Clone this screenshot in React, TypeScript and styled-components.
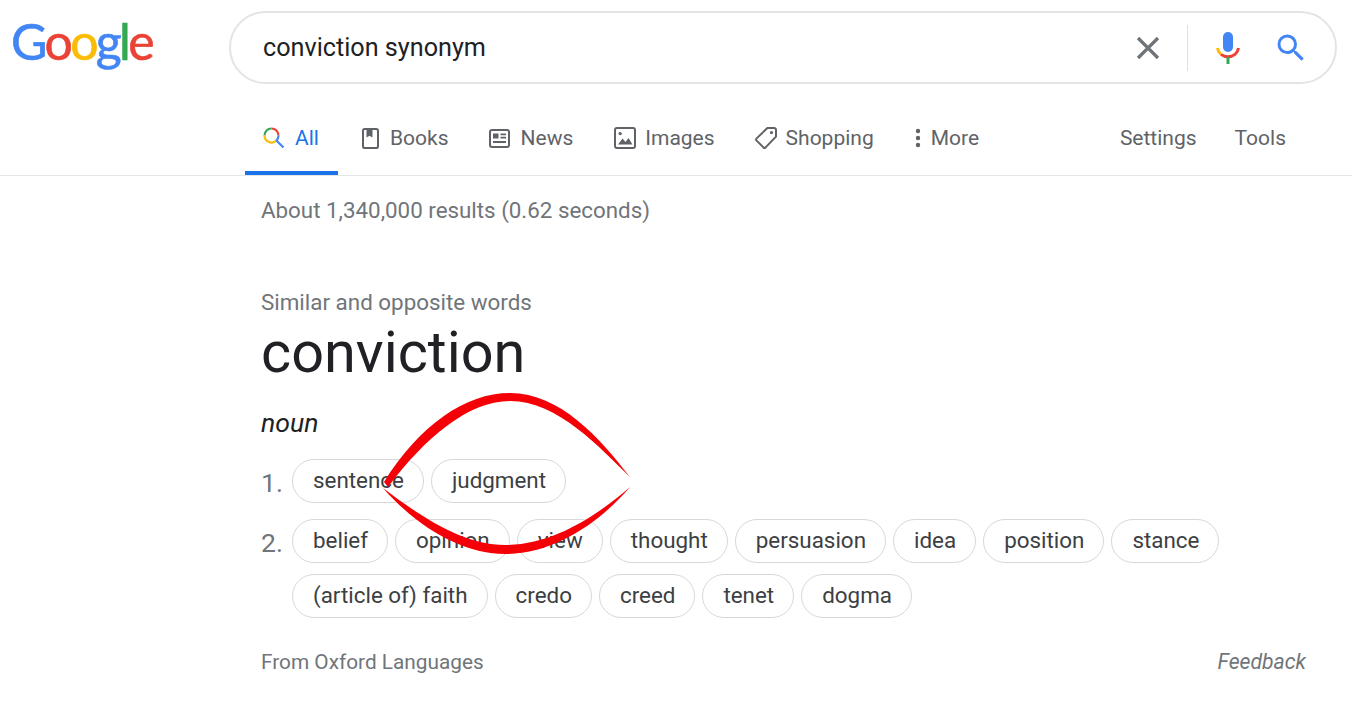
import React from "react";
import styled, { createGlobalStyle } from "styled-components";

const GlobalStyle = createGlobalStyle`
  html, body {
    margin: 0;
    background: #fff;
    font-family: Roboto, "Liberation Sans", sans-serif;
  }
`;

const Page = styled.div`
  position: relative;
  width: 1352px;
  height: 702px;
  overflow: hidden;
`;

const Header = styled.header`
  display: flex;
  align-items: center;
  height: 73px;
  padding: 11px 15px 0 12px;
`;

const Logo = styled.div`
  width: 218px;
  margin: -14px 0 0 -1px;
  font-family: Lato, sans-serif;
  font-size: 50px;
  line-height: 70px;
  letter-spacing: -2.7px;
  -webkit-text-stroke: 0.6px currentColor;
`;

const LogoLetter = styled.span<{ $color: string }>`
  color: ${(p) => p.$color};
`;

const SearchBox = styled.div`
  flex: 1;
  height: 73px;
  display: flex;
  align-items: center;
  padding: 0 26.5px 0 32px;
  border: 2px solid #e3e4e8;
  border-radius: 37px;
  box-sizing: border-box;
`;

const Query = styled.div`
  flex: 1;
  margin-top: -1px;
  font-size: 25.2px;
  color: #202124;
`;

const BoxDivider = styled.span`
  width: 1px;
  height: 46px;
  margin: 0 28px 0 21px;
  background: #dfe1e5;
`;

const MicWrap = styled.span`
  display: flex;
  margin-right: 33px;
`;

const Tabs = styled.nav`
  display: flex;
  height: 92px;
  padding: 0 66px 0 245px;
  border-bottom: 1px solid #e4e5e7;
  box-sizing: border-box;
`;

const Tab = styled.div<{ $gap?: number }>`
  display: flex;
  align-items: center;
  gap: ${(p) => p.$gap ?? 10}px;
  height: 91px;
  padding: 17px 0 0;
  box-sizing: border-box;
  font-size: 21px;
  color: #5f6368;
`;

const ActiveTab = styled(Tab)`
  width: 93px;
  margin-right: 24px;
  padding: 21px 0 0 17px;
  border-bottom: 4px solid #1a73e8;
  color: #1a73e8;
`;

const PlainTab = styled(Tab)<{ $after: number }>`
  margin-right: ${(p) => p.$after}px;
`;

const RightTabs = styled.div`
  display: flex;
  gap: 38px;
  margin-left: auto;
`;

const Stats = styled.div`
  padding: 22px 0 0 261px;
  font-size: 22.35px;
  line-height: 25px;
  color: #70757a;
`;

const Panel = styled.section`
  padding: 67px 46px 0 261px;
`;

const Eyebrow = styled.div`
  font-size: 22.4px;
  line-height: 25px;
  color: #70757a;
`;

const Word = styled.h1`
  margin: 3px 0 0;
  font-size: 57.6px;
  line-height: 70px;
  font-weight: 400;
  color: #202124;
`;

const Pos = styled.div`
  margin-top: 21px;
  font-size: 26.6px;
  line-height: 28px;
  font-style: italic;
  color: #202124;
`;

const Senses = styled.ol`
  list-style: none;
  margin: 22px 0 0;
  padding: 0;
`;

const Sense = styled.li`
  display: flex;
  margin-bottom: 16px;
`;

const SenseNumber = styled.span`
  width: 31px;
  padding-top: 10px;
  font-size: 26.5px;
  line-height: 28px;
  color: #70757a;
`;

const ChipList = styled.div`
  display: flex;
  flex-wrap: wrap;
  gap: 11px 7px;
  width: 960px;
`;

const Chip = styled.span`
  height: 44px;
  display: flex;
  align-items: center;
  padding: 0 19px 2px 20px;
  box-sizing: border-box;
  border: 1px solid #d6d8dc;
  border-radius: 22px;
  font-size: 22.4px;
  color: #3c4043;
`;

const Footer = styled.footer`
  display: flex;
  justify-content: space-between;
  margin-top: 32px;
  font-size: 20.8px;
  line-height: 24px;
  color: #70757a;
`;

const FeedbackLink = styled.span`
  font-size: 21.2px;
  font-style: italic;
`;

const Scribble = styled.svg`
  position: absolute;
  left: 0;
  top: 0;
  pointer-events: none;
`;

const SearchIcon = ({ size }: { size: number }) => (
  <svg width={size} height={size} viewBox="0 0 24 24">
    <path
      fill="#4285f4"
      d="M15.5 14h-.79l-.28-.27A6.471 6.471 0 0 0 16 9.5 6.5 6.5 0 1 0 9.5 16c1.61 0 3.09-.59 4.23-1.57l.27.28v.79l5 4.99L20.49 19l-4.99-5zm-6 0C7.01 14 5 11.99 5 9.5S7.01 5 9.5 5 14 7.01 14 9.5 11.99 14 9.5 14z"
    />
  </svg>
);

const ClearIcon = () => (
  <svg width="36" height="36" viewBox="0 0 36 36">
    <path d="M8 8 L28 28 M28 8 L8 28" stroke="#70757a" strokeWidth="3.2" fill="none" />
  </svg>
);

const MicIcon = () => (
  <svg width="24" height="32" viewBox="0 0 24 32">
    <rect x="7" y="0" width="10" height="20" rx="5" fill="#4285f4" />
    <path d="M1.5 16 C2 19 3 20.8 5 22.4" stroke="#fbbc05" strokeWidth="3" fill="none" />
    <path d="M5 22.4 C9 25.6 15 25.6 19 22.4 C21 20.8 22 19 22.5 16" stroke="#ea4335" strokeWidth="3" fill="none" />
    <rect x="10.5" y="25" width="3" height="7" fill="#34a853" />
  </svg>
);

const ColorSearchIcon = () => (
  <svg width="24" height="24" viewBox="0 0 24 24" fill="none" strokeWidth="2.2">
    <path d="M9.5 2.5 A7 7 0 0 1 16.5 9.5" stroke="#ea4335" />
    <path d="M9.5 2.5 A7 7 0 0 0 2.5 9.5" stroke="#34a853" />
    <path d="M2.5 9.5 A7 7 0 0 0 6.4 15.8" stroke="#fbbc05" />
    <path d="M6.4 15.8 A7 7 0 0 0 14.4 14.5" stroke="#fbbc05" />
    <path d="M14.4 14.5 L21.5 21.5 M16.5 9.5 A7 7 0 0 1 14.4 14.5" stroke="#4285f4" />
  </svg>
);

const BookIcon = () => (
  <svg width="17" height="21" viewBox="0 0 17 21" fill="none">
    <rect x="1" y="1" width="15" height="19" rx="1.8" stroke="#5f6368" strokeWidth="2" />
    <path d="M4.5 1 H10.5 V9.5 L7.5 7.8 L4.5 9.5 Z" fill="#5f6368" />
  </svg>
);

const NewsIcon = () => (
  <svg width="21" height="19" viewBox="0 0 21 19" fill="none">
    <rect x="1" y="1" width="19" height="17" rx="2" stroke="#5f6368" strokeWidth="2" />
    <rect x="4" y="4.5" width="5.5" height="5" fill="#5f6368" />
    <path d="M11.5 5.3 H17 M11.5 8.6 H17 M4 13 H17" stroke="#5f6368" strokeWidth="1.8" />
  </svg>
);

const ImageIcon = () => (
  <svg width="22" height="22" viewBox="0 0 22 22" fill="none">
    <rect x="1" y="1" width="20" height="20" rx="2" stroke="#5f6368" strokeWidth="2" />
    <circle cx="6.2" cy="6.6" r="1.7" fill="#5f6368" />
    <path d="M4 17.5 L8.5 11.5 L11.5 15 L14.5 11 L18.5 17.5 Z" fill="#5f6368" />
  </svg>
);

const TagIcon = () => (
  <svg width="24" height="24" viewBox="0 0 24 24" fill="none">
    <path
      d="M13.4 2 H20.2 A1.8 1.8 0 0 1 22 3.8 V10.6 L11.6 21.4 A1.6 1.6 0 0 1 9.4 21.4 L2.6 14.6 A1.6 1.6 0 0 1 2.6 12.4 Z"
      stroke="#5f6368"
      strokeWidth="2"
      strokeLinejoin="round"
    />
    <circle cx="17.5" cy="6.6" r="1.6" fill="#5f6368" />
  </svg>
);

const MoreIcon = () => (
  <svg width="6" height="20" viewBox="0 0 6 20" fill="#5f6368">
    <circle cx="3" cy="3" r="2.2" />
    <circle cx="3" cy="10" r="2.2" />
    <circle cx="3" cy="17" r="2.2" />
  </svg>
);

const senses = [
  ["sentence", "judgment"],
  [
    "belief",
    "opinion",
    "view",
    "thought",
    "persuasion",
    "idea",
    "position",
    "stance",
    "(article of) faith",
    "credo",
    "creed",
    "tenet",
    "dogma",
  ],
];

const logoLetters: [string, string][] = [
  ["G", "#4285f4"],
  ["o", "#ea4335"],
  ["o", "#fbbc05"],
  ["g", "#4285f4"],
  ["l", "#34a853"],
  ["e", "#ea4335"],
];

export default function App() {
  return (
    <Page>
      <GlobalStyle />
      <Header>
        <Logo>
          {logoLetters.map(([letter, color], i) => (
            <LogoLetter key={i} $color={color}>
              {letter}
            </LogoLetter>
          ))}
        </Logo>
        <SearchBox>
          <Query>conviction synonym</Query>
          <ClearIcon />
          <BoxDivider />
          <MicWrap>
            <MicIcon />
          </MicWrap>
          <SearchIcon size={36} />
        </SearchBox>
      </Header>

      <Tabs>
        <ActiveTab $gap={9}>
          <ColorSearchIcon />
          All
        </ActiveTab>
        <PlainTab $after={40} $gap={11}>
          <BookIcon />
          Books
        </PlainTab>
        <PlainTab $after={41} $gap={11}>
          <NewsIcon />
          News
        </PlainTab>
        <PlainTab $after={39} $gap={9}>
          <ImageIcon />
          Images
        </PlainTab>
        <PlainTab $after={41} $gap={8}>
          <TagIcon />
          Shopping
        </PlainTab>
        <Tab>
          <MoreIcon />
          More
        </Tab>
        <RightTabs>
          <Tab>Settings</Tab>
          <Tab>Tools</Tab>
        </RightTabs>
      </Tabs>

      <Stats>About 1,340,000 results (0.62 seconds)</Stats>

      <Panel>
        <Eyebrow>Similar and opposite words</Eyebrow>
        <Word>conviction</Word>
        <Pos>noun</Pos>
        <Senses>
          {senses.map((chips, i) => (
            <Sense key={i}>
              <SenseNumber>{i + 1}.</SenseNumber>
              <ChipList>
                {chips.map((c) => (
                  <Chip key={c}>{c}</Chip>
                ))}
              </ChipList>
            </Sense>
          ))}
        </Senses>
        <Footer>
          <span>From Oxford Languages</span>
          <FeedbackLink>Feedback</FeedbackLink>
        </Footer>
      </Panel>

      <Scribble width="1352" height="702" viewBox="0 0 1352 702">
        <path
          fill="#f40006"
          d="M384 482 C420 425 465 393 510 393 C560 393 600 438 630 477 C600 448 558 401 510 401 C468 401 425 438 388 487 Z"
        />
        <path
          fill="#f40006"
          d="M383 488 C420 530 465 554 505 554 C555 554 600 522 630 487 C600 513 555 545 505 545 C465 545 425 520 383 488 Z"
        />
      </Scribble>
    </Page>
  );
}
